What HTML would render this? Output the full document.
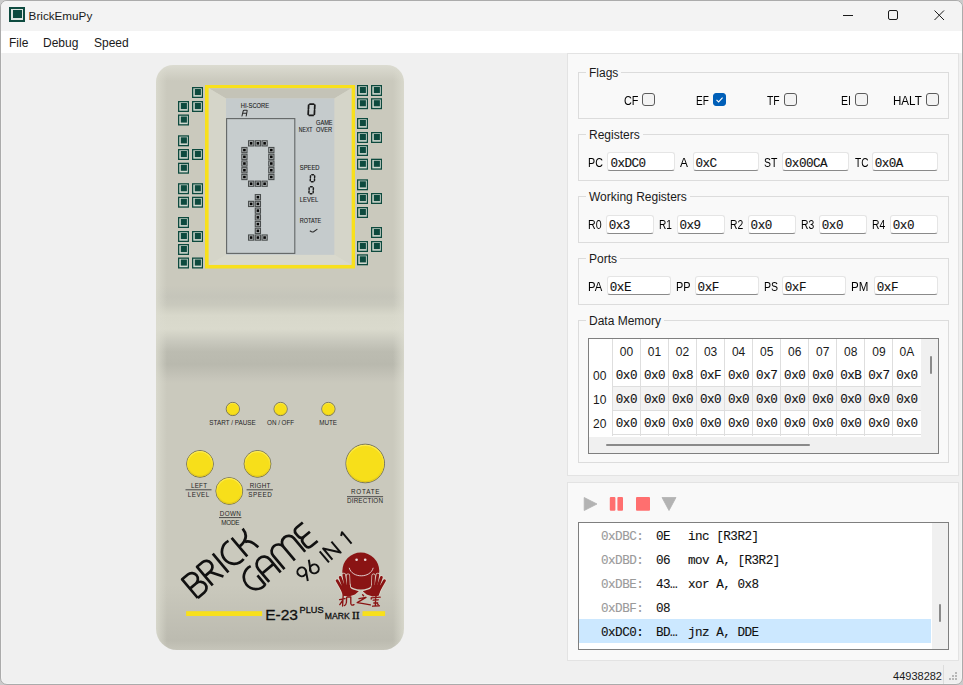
<!DOCTYPE html>
<html><head><meta charset="utf-8">
<style>
*{margin:0;padding:0;box-sizing:border-box}
html,body{width:963px;height:685px;overflow:hidden;background:#cbcbcb}
body{font-family:"Liberation Sans",sans-serif;font-size:11.5px;color:#1a1a1a;position:relative}
.win{position:absolute;left:0;top:0;width:963px;height:685px;border:1px solid #ababab;border-radius:7px;background:#f0f0f0;overflow:hidden;box-shadow:inset 1px 0 0 #f4f4f4,inset -1px 0 0 #f4f4f4,inset 0 -1px 0 #f4f4f4}
.title{position:absolute;left:0;top:0;width:961px;height:30px;background:#f3f3f3}
.menu{position:absolute;left:0;top:30px;width:961px;height:22px;background:#fff}
.a{position:absolute;white-space:nowrap}
.mono{font-family:"Liberation Mono",monospace;-webkit-text-stroke:0.12px currentColor}
.panel{position:absolute;background:#f9f9f9;border:1px solid #e3e3e3}
.grp{position:absolute;border:1px solid #dcdcdc}
.gt{position:absolute;background:#f9f9f9;padding:0 3px;font-size:12px;line-height:14px}
.lbl{position:absolute;font-size:12px;line-height:14px;color:#000}
.ed{position:absolute;height:19px;background:#fff;border:1px solid #e5e5e5;border-bottom:1px solid #8a8a8a;border-radius:3px}
.ed span{position:absolute;left:2px;top:2px;font-family:"Liberation Mono",monospace;-webkit-text-stroke:0.12px currentColor;font-size:12.6px;letter-spacing:-0.5px;line-height:14px;color:#111}
.cb{position:absolute;width:13px;height:13px;border:1px solid #5c5c5c;border-radius:3px;background:#f3f3f3}
</style></head><body>
<div class="win">
  <div class="title"></div>
  <div class="menu"></div>
</div>
<!-- title bar -->
<svg class="a" style="left:0;top:0" width="963" height="30">
  <rect x="9" y="7" width="16" height="15" fill="#0e4b40"/>
  <rect x="11" y="9" width="12" height="11" fill="#dfe6e2"/>
  <rect x="13" y="10" width="9" height="8" fill="#0e4b40"/>
  <line x1="843" y1="15.5" x2="853" y2="15.5" stroke="#1a1a1a" stroke-width="1"/>
  <rect x="888.5" y="10.5" width="9" height="9" rx="1.5" fill="none" stroke="#1a1a1a" stroke-width="1"/>
  <path d="M934.5 10.5 L944 20 M944 10.5 L934.5 20" stroke="#1a1a1a" stroke-width="1"/>
</svg>
<div class="a" style="left:28.6px;top:8.7px;font-size:11.7px;line-height:14px">BrickEmuPy</div>
<div class="a" style="left:9px;top:36px;font-size:12px;line-height:14px">File</div>
<div class="a" style="left:43px;top:36px;font-size:12px;line-height:14px">Debug</div>
<div class="a" style="left:94px;top:36px;font-size:12px;line-height:14px">Speed</div>

<!-- DEVICE -->
<svg id="dev" class="a" style="left:0;top:0" width="963" height="685" viewBox="0 0 963 685">
  <defs>
    <linearGradient id="band" x1="0" y1="0" x2="0" y2="1">
      <stop offset="0" stop-color="#cac9bd"/>
      <stop offset="0.12" stop-color="#c5c5ba"/>
      <stop offset="0.2" stop-color="#c9c9bd"/>
      <stop offset="0.31" stop-color="#d8d8cb"/>
      <stop offset="0.45" stop-color="#dadacd"/>
      <stop offset="0.57" stop-color="#c9c9be"/>
      <stop offset="0.68" stop-color="#bcbcb1"/>
      <stop offset="0.81" stop-color="#b9b9ae"/>
      <stop offset="0.95" stop-color="#c6c5ba"/>
      <stop offset="1" stop-color="#cac9bd"/>
    </linearGradient>
    <linearGradient id="edgeL" x1="0" y1="0" x2="1" y2="0">
      <stop offset="0" stop-color="#dcdcd0"/>
      <stop offset="1" stop-color="#dcdcd0" stop-opacity="0"/>
    </linearGradient>
    <linearGradient id="edgeR" x1="1" y1="0" x2="0" y2="0">
      <stop offset="0" stop-color="#dcdcd0"/>
      <stop offset="1" stop-color="#dcdcd0" stop-opacity="0"/>
    </linearGradient>
    <linearGradient id="edgeT" x1="0" y1="0" x2="0" y2="1">
      <stop offset="0" stop-color="#e0e0d6"/>
      <stop offset="1" stop-color="#e0e0d6" stop-opacity="0"/>
    </linearGradient>
    <linearGradient id="botg" x1="0" y1="0" x2="0" y2="1">
      <stop offset="0" stop-color="#bcbbb0" stop-opacity="0"/>
      <stop offset="0.85" stop-color="#bcbbb0" stop-opacity="1"/>
      <stop offset="1" stop-color="#c6c5ba" stop-opacity="1"/>
    </linearGradient>
    <radialGradient id="btn" cx="0.5" cy="0.45" r="0.5">
      <stop offset="0.8" stop-color="#f8e020"/>
      <stop offset="1" stop-color="#e8cf18"/>
    </radialGradient>
    <g id="gsq">
      <rect x="0" y="0" width="11" height="11" fill="#0d4a3e"/>
      <rect x="1.3" y="1.3" width="8.5" height="8.4" fill="#d0d8cf"/>
      <rect x="2.8" y="2" width="6.1" height="6.1" fill="#0d4a3e"/>
    </g>
    <g id="blk">
      <rect x="0" y="0" width="6.3" height="6.3" fill="#4a4e4e"/>
      <rect x="1.1" y="1.1" width="4.1" height="4.1" fill="#b9bebe"/>
      <rect x="1.85" y="1.85" width="2.6" height="2.6" fill="#050505"/>
    </g>
  </defs>
  <mask id="bodymask" maskUnits="userSpaceOnUse" x="0" y="0" width="963" height="685"><path d="M173,65 H387 A17,17 0 0 1 404,82 V629 A21,21 0 0 1 383,650 H177 A21,21 0 0 1 156,629 V82 A17,17 0 0 1 173,65 Z" fill="#fff"/></mask>
  <g mask="url(#bodymask)">
  <rect x="156" y="65" width="248" height="585" fill="#cac9bd"/>
  <rect x="156" y="285" width="248" height="98" fill="url(#band)"/>
  <rect x="156" y="65" width="248" height="16" fill="url(#edgeT)" opacity="0.8"/>
  <rect x="156" y="585" width="248" height="65" fill="url(#botg)"/>
  <rect x="156" y="65" width="11" height="585" fill="url(#edgeL)" opacity="0.8"/>
  <rect x="393" y="65" width="11" height="585" fill="url(#edgeR)" opacity="0.8"/>
  </g>
  <rect x="205" y="85" width="150" height="183.5" fill="#f8e01c"/>
  <rect x="208.8" y="88.3" width="142.6" height="176.5" fill="#d6d6ca"/>
  <polygon points="208.8,88.3 351.4,88.3 334.3,98.4 226,98.4" fill="#c4c3b7"/>
  <polygon points="208.8,88.3 226,98.4 226,254.8 208.8,264.8" fill="#d5d5c9"/>
  <polygon points="351.4,88.3 334.3,98.4 334.3,254.8 351.4,264.8" fill="#d5d5c9"/>
  <polygon points="208.8,264.8 226,254.8 334.3,254.8 351.4,264.8" fill="#d9d9cd"/>
  <rect x="226" y="98.4" width="108.3" height="156.4" fill="#c5cbcc"/>
  <rect x="226.6" y="118.6" width="68.2" height="134.8" fill="#c7cdce" stroke="#626666" stroke-width="1.1"/>
  <g font-family="Liberation Sans" fill="#1c1c1c" font-size="7.6" stroke="#1c1c1c" stroke-width="0.12">
    <text x="240.8" y="108" textLength="28.4" lengthAdjust="spacingAndGlyphs">HI-SCORE</text>
    <text x="298.8" y="131.8" textLength="13.6" lengthAdjust="spacingAndGlyphs">NEXT</text>
    <text x="316" y="124.9" textLength="16.6" lengthAdjust="spacingAndGlyphs">GAME</text>
    <text x="316" y="131.6" textLength="16.2" lengthAdjust="spacingAndGlyphs">OVER</text>
    <text x="299.8" y="170.4" textLength="19.7" lengthAdjust="spacingAndGlyphs">SPEED</text>
    <text x="299.8" y="201.9" textLength="18.4" lengthAdjust="spacingAndGlyphs">LEVEL</text>
    <text x="299.8" y="222.9" textLength="21.4" lengthAdjust="spacingAndGlyphs">ROTATE</text>
  </g>
  <g fill="none" stroke="#2a2a2a" stroke-width="1.05" stroke-linecap="round">
    <path d="M242 116 L243.2 111 Q243.5 110.2 244.3 110.2 L246.5 110.2 Q247.3 110.2 247.1 111 L246.2 116 M243 113.2 L246.5 113.2"/>
  
    <path d="M309.95 104.00 L313.65 104.00 M309.35 115.40 L313.05 115.40 M308.64 105.05 L308.44 108.95 M308.36 110.45 L308.16 114.35 M314.84 105.05 L314.64 108.95 M314.56 110.45 L314.36 114.35" stroke-width="1.75" stroke="#1a1a1a"/>
    <path d="M311.80 174.80 L313.50 174.80 M311.45 181.80 L313.15 181.80 M310.50 175.85 L310.41 177.55 M310.34 179.05 L310.25 180.75 M314.70 175.85 L314.61 177.55 M314.54 179.05 L314.45 180.75" stroke-width="1.45" stroke="#1a1a1a"/>
    <path d="M310.50 186.80 L312.20 186.80 M310.15 193.80 L311.85 193.80 M309.20 187.85 L309.11 189.55 M309.04 191.05 L308.95 192.75 M313.40 187.85 L313.31 189.55 M313.24 191.05 L313.15 192.75" stroke-width="1.45" stroke="#1a1a1a"/>
    <path d="M310.2,231 Q312,232.4 313.6,231.8 L317,229.4" stroke-width="1.1"/>
  </g>
<use href="#gsq" x="192" y="87.0"/>
<use href="#gsq" x="178" y="101.0"/>
<use href="#gsq" x="192" y="101.0"/>
<use href="#gsq" x="178" y="114.5"/>
<use href="#gsq" x="178" y="135.3"/>
<use href="#gsq" x="178" y="149.0"/>
<use href="#gsq" x="192" y="149.0"/>
<use href="#gsq" x="178" y="162.7"/>
<use href="#gsq" x="178" y="183.2"/>
<use href="#gsq" x="192" y="183.2"/>
<use href="#gsq" x="178" y="196.7"/>
<use href="#gsq" x="192" y="196.7"/>
<use href="#gsq" x="178" y="217.0"/>
<use href="#gsq" x="178" y="231.0"/>
<use href="#gsq" x="192" y="231.0"/>
<use href="#gsq" x="178" y="244.0"/>
<use href="#gsq" x="178" y="257.5"/>
<use href="#gsq" x="192" y="257.5"/>
<use href="#gsq" x="357" y="85.0"/>
<use href="#gsq" x="371" y="85.0"/>
<use href="#gsq" x="357" y="98.2"/>
<use href="#gsq" x="371" y="98.2"/>
<use href="#gsq" x="357" y="118.0"/>
<use href="#gsq" x="357" y="132.0"/>
<use href="#gsq" x="371" y="132.0"/>
<use href="#gsq" x="357" y="145.0"/>
<use href="#gsq" x="357" y="158.7"/>
<use href="#gsq" x="371" y="158.7"/>
<use href="#gsq" x="357" y="179.3"/>
<use href="#gsq" x="357" y="193.0"/>
<use href="#gsq" x="371" y="193.0"/>
<use href="#gsq" x="357" y="207.0"/>
<use href="#gsq" x="371" y="227.0"/>
<use href="#gsq" x="357" y="241.0"/>
<use href="#gsq" x="371" y="241.0"/>
<use href="#gsq" x="357" y="254.3"/>
<use href="#blk" x="247.99" y="140.19"/>
<use href="#blk" x="254.72" y="140.19"/>
<use href="#blk" x="261.45" y="140.19"/>
<use href="#blk" x="241.26" y="146.92"/>
<use href="#blk" x="241.26" y="153.65"/>
<use href="#blk" x="241.26" y="160.38"/>
<use href="#blk" x="241.26" y="167.11"/>
<use href="#blk" x="241.26" y="173.84"/>
<use href="#blk" x="268.18" y="146.92"/>
<use href="#blk" x="268.18" y="153.65"/>
<use href="#blk" x="268.18" y="160.38"/>
<use href="#blk" x="268.18" y="167.11"/>
<use href="#blk" x="268.18" y="173.84"/>
<use href="#blk" x="247.99" y="180.57"/>
<use href="#blk" x="254.72" y="180.57"/>
<use href="#blk" x="261.45" y="180.57"/>
<use href="#blk" x="254.72" y="194.03"/>
<use href="#blk" x="247.99" y="200.76"/>
<use href="#blk" x="254.72" y="200.76"/>
<use href="#blk" x="254.72" y="207.49"/>
<use href="#blk" x="254.72" y="214.22"/>
<use href="#blk" x="254.72" y="220.95"/>
<use href="#blk" x="254.72" y="227.68"/>
<use href="#blk" x="247.99" y="234.41"/>
<use href="#blk" x="254.72" y="234.41"/>
<use href="#blk" x="261.45" y="234.41"/>


  <defs>
    <radialGradient id="yb" cx="0.5" cy="0.5" r="0.5">
      <stop offset="0" stop-color="#f7df1a"/>
      <stop offset="0.86" stop-color="#f7df1a"/>
      <stop offset="0.93" stop-color="#fae84a"/>
      <stop offset="1" stop-color="#e9d21e"/>
    </radialGradient>
  </defs>
  <defs><linearGradient id="ring" x1="0" y1="0" x2="0" y2="1">
      <stop offset="0" stop-color="#fcea55"/>
      <stop offset="0.5" stop-color="#f8e22a"/>
      <stop offset="1" stop-color="#e2c81c"/>
    </linearGradient></defs>
  <g><circle cx="232.8" cy="409" r="6.6" fill="#f7df1a" stroke="#66665c" stroke-width="0.9"/><circle cx="232.8" cy="409" r="5.75" fill="none" stroke="url(#ring)" stroke-width="0.8"/><circle cx="280.6" cy="409" r="6.6" fill="#f7df1a" stroke="#66665c" stroke-width="0.9"/><circle cx="280.6" cy="409" r="5.75" fill="none" stroke="url(#ring)" stroke-width="0.8"/><circle cx="328.4" cy="409" r="6.6" fill="#f7df1a" stroke="#66665c" stroke-width="0.9"/><circle cx="328.4" cy="409" r="5.75" fill="none" stroke="url(#ring)" stroke-width="0.8"/><circle cx="200" cy="463.9" r="13.4" fill="#f7df1a" stroke="#66665c" stroke-width="0.9"/><circle cx="200" cy="463.9" r="12.30" fill="none" stroke="url(#ring)" stroke-width="1.3"/><circle cx="257.5" cy="463.9" r="13.4" fill="#f7df1a" stroke="#66665c" stroke-width="0.9"/><circle cx="257.5" cy="463.9" r="12.30" fill="none" stroke="url(#ring)" stroke-width="1.3"/><circle cx="229.3" cy="491" r="13.4" fill="#f7df1a" stroke="#66665c" stroke-width="0.9"/><circle cx="229.3" cy="491" r="12.30" fill="none" stroke="url(#ring)" stroke-width="1.3"/><circle cx="365.2" cy="463.5" r="19.3" fill="#f7df1a" stroke="#66665c" stroke-width="0.9"/><circle cx="365.2" cy="463.5" r="18.20" fill="none" stroke="url(#ring)" stroke-width="1.3"/></g>
  <g font-family="Liberation Sans" fill="#262626" font-size="6.3">
    <text x="209.3" y="424.6" textLength="46.5" lengthAdjust="spacing">START / PAUSE</text>
    <text x="267" y="424.6" textLength="27.2" lengthAdjust="spacing">ON / OFF</text>
    <text x="319.2" y="424.6" textLength="17.8" lengthAdjust="spacing">MUTE</text>
    <text x="191" y="488" textLength="16" lengthAdjust="spacing">LEFT</text>
    <text x="187.8" y="496.8" textLength="21.5" lengthAdjust="spacing">LEVEL</text>
    <text x="249.8" y="488" textLength="20.5" lengthAdjust="spacing">RIGHT</text>
    <text x="248.3" y="496.8" textLength="23.5" lengthAdjust="spacing">SPEED</text>
    <text x="219.8" y="516" textLength="21" lengthAdjust="spacing">DOWN</text>
    <text x="221.2" y="524.8" textLength="18.2" lengthAdjust="spacing">MODE</text>
    <text x="351" y="494.1" textLength="28.5" lengthAdjust="spacing">ROTATE</text>
    <text x="347" y="502.9" textLength="36" lengthAdjust="spacing">DIRECTION</text>
  </g>
  <g stroke="#3a3a3a" stroke-width="0.9">
    <line x1="185.5" y1="489.8" x2="211.5" y2="489.8"/>
    <line x1="246.6" y1="489.8" x2="272.9" y2="489.8"/>
    <line x1="219" y1="517.6" x2="241.4" y2="517.6"/>
    <line x1="347" y1="496.7" x2="383.1" y2="496.7"/>
  </g>
  <rect x="186.1" y="611.2" width="76" height="4.8" fill="#f8e01c"/>
  <rect x="362.5" y="611.2" width="22.6" height="4.8" fill="#f8e01c"/>
  <g font-family="Liberation Sans" fill="#101010" stroke="#101010" stroke-width="0.3">
    <text x="265.2" y="619.6" font-size="15" textLength="32.8" lengthAdjust="spacingAndGlyphs">E-23</text>
    <text x="299.6" y="612.9" font-size="8.3" textLength="24" lengthAdjust="spacingAndGlyphs">PLUS</text>
    <text x="324.8" y="618.8" font-size="9.5" textLength="25" lengthAdjust="spacingAndGlyphs">MARK</text>
    <text x="352" y="618.8" font-size="9.5" font-family="Liberation Serif" textLength="7.7" lengthAdjust="spacingAndGlyphs">II</text>
  </g>

  <g transform="translate(197.8,598) rotate(-40) scale(1,-1)" fill="none" stroke="#111" stroke-width="2.7" stroke-linecap="butt" stroke-linejoin="round">
    <path d="M0,0 V24.4 H7.5 A6.1,6.1 0 0 0 7.5,12.2 H0 M7.5,12.2 H8.5 A6.1,6.1 0 0 0 8.5,0 H0"/>
    <path d="M19.5,0 V24.4 H26.5 A6.1,6.1 0 0 0 26.5,12.2 H19.5 M26,12.2 L33.5,0"/>
    <path d="M40,0 V24.4"/>
    <path d="M60.2,24 A12.1,12.1 0 1 1 60.2,0.4"/>
    <path d="M64.6,0 V24.4 M79,24.4 Q79,12.5 64.6,12.5 M72,12.5 Q77.5,11.5 79,0"/>
    <g transform="translate(0,-33.6)">
      <path d="M61,24 A12.1,12.1 0 1 1 60.2,0.4 M60.2,0 V12.5"/>
      <path d="M65,0 V16.9 A7.5,7.5 0 0 0 80,16.9 V0 M65,11 H80"/>
      <path d="M85,0 V17.65 A6.75,6.75 0 0 0 98.5,17.65 V0 M98.5,17.65 A6.75,6.75 0 0 0 112,17.65 V0"/>
      <path d="M129,24 H121 Q116.5,24 116.5,19.5 V16.5 Q116.5,12.3 121,12.3 H128.5 M121,12.3 Q116,12.3 116,7.5 V4.6 Q116,0.3 120.5,0.3 H128.5"/>
    </g>
  </g>
  <g transform="translate(301.8,571.9) rotate(-40) scale(1,-1)" fill="none" stroke="#111" stroke-width="2" stroke-linejoin="round">
    <circle cx="0" cy="0" r="4.4"/>
    <path d="M4.3,-1 L-1.2,-10.8"/>
    <circle cx="11.5" cy="-5.8" r="4.4"/>
    <path d="M7.3,-5 L13.2,4.8"/>
    <path d="M26.9,-10.2 V4.2"/>
    <path d="M31.4,-10.2 V4.2 L42.2,-10.2 V4.2"/>
    <path d="M56.3,-10.3 V4.6 L53.2,2.2"/>
  </g>
  <g fill="#8a1414">
    <circle cx="360.8" cy="571.1" r="18.5"/>
  </g>
  <g id="lhand">
    <g stroke="#ddd8cc" stroke-width="4.2" stroke-linecap="round">
      <line x1="337.1" y1="580.6" x2="342" y2="589"/>
      <line x1="340.2" y1="577.4" x2="344" y2="588"/>
      <line x1="343.8" y1="574.9" x2="346" y2="588"/>
      <line x1="348" y1="575.6" x2="348.5" y2="588"/>
    </g>
    <path d="M338.5,585 L349.8,584.5 L350.3,587.5 Q351.5,589.3 354,589.8 L358.8,591.2 L355,594.4 L349,596.4 L343,595.8 Z" fill="#8a1414" stroke="#ddd8cc" stroke-width="1.4"/>
    <g stroke="#8a1414" stroke-width="2.8" stroke-linecap="round">
      <line x1="337.1" y1="580.6" x2="342" y2="589"/>
      <line x1="340.2" y1="577.4" x2="344" y2="588"/>
      <line x1="343.8" y1="574.9" x2="346" y2="588"/>
      <line x1="348" y1="575.6" x2="348.5" y2="588"/>
    </g>
    <path d="M339.5,586 L349.8,585 L350.3,587.5 Q351.5,589.3 354,589.8 L358.8,591.2 L355,594.4 L349,596.4 L343,595.8 Z" fill="#8a1414"/>
  </g>
  <use href="#lhand" transform="translate(721.6,0) scale(-1,1)"/>
  <g fill="#fff" opacity="0.85">
    <circle cx="356.6" cy="559.7" r="1.3"/>
    <circle cx="365.2" cy="559.7" r="1.3"/>
  </g>
  <path d="M349.2,567.8 C352,578.5 370.5,578.5 373.2,567.8" fill="none" stroke="#e8dede" stroke-width="0.9"/>
  <g fill="none" stroke="#8a1414" stroke-width="1.35" stroke-linecap="round" stroke-linejoin="round">
    <path d="M339.6,599.6 L345,598.6 M343.2,594.6 L342.6,606 M342.6,600.5 L339.8,604.6 M346.6,597.4 L346.4,602.5 Q346,605 344.4,605.6 M347.2,597 L350.8,597 L350.8,603.5 Q351.2,606 354,604.6"/>
    <path d="M362.6,594.8 L363.6,595.8 M359,598.6 L366,597.4 L357.2,602.6 Q363,603.6 370.4,604.8"/>
    <path d="M375.6,595.4 L376,596.4 M371.2,597.8 L380.2,597.2 M371.4,597.8 L371.2,599 M373.2,600.2 L378.2,599.8 M375.6,598.4 L375.4,605.8 M372.6,606.2 L379.4,605.8 M373.8,603 L377.6,602.8 M377.6,604 L378.2,604.6"/>
  </g>

</svg>

<div id="rp">
<div class="panel" style="left:567px;top:53px;width:392px;height:423px"></div>
<div class="panel" style="left:567px;top:482px;width:392px;height:179px"></div>
<div class="grp" style="left:578px;top:72.0px;width:371px;height:47.0px"></div>
<div class="gt" style="left:586px;top:65.94px">Flags</div>
<div class="grp" style="left:578px;top:134.0px;width:371px;height:47.1px"></div>
<div class="gt" style="left:586px;top:127.94px">Registers</div>
<div class="grp" style="left:578px;top:195.9px;width:371px;height:46.7px"></div>
<div class="gt" style="left:586px;top:190.04px">Working Registers</div>
<div class="grp" style="left:578px;top:257.6px;width:371px;height:47.1px"></div>
<div class="gt" style="left:586px;top:252.04px">Ports</div>
<div class="grp" style="left:578px;top:319.8px;width:371px;height:142.9px"></div>
<div class="gt" style="left:586px;top:313.84px">Data Memory</div>
<div class="lbl" style="left:623.5px;top:93.84px;transform:scaleX(0.906);transform-origin:0 0">CF</div>
<div class="cb" style="left:642.0px;top:93px"></div>
<div class="lbl" style="left:696px;top:93.84px;transform:scaleX(0.836);transform-origin:0 0">EF</div>
<div class="cb" style="left:712.8px;top:93px;background:#005fb8;border-color:#005fb8"><svg width="11" height="11" style="position:absolute;left:0;top:0"><path d="M2.5 5.8 L4.6 7.9 L8.6 3.6" fill="none" stroke="#fff" stroke-width="1.1"/></svg></div>
<div class="lbl" style="left:767.2px;top:93.84px;transform:scaleX(0.864);transform-origin:0 0">TF</div>
<div class="cb" style="left:784.0px;top:93px"></div>
<div class="lbl" style="left:841.3px;top:93.84px;transform:scaleX(0.875);transform-origin:0 0">EI</div>
<div class="cb" style="left:855.0px;top:93px"></div>
<div class="lbl" style="left:893px;top:93.84px;transform:scaleX(0.966);transform-origin:0 0">HALT</div>
<div class="cb" style="left:925.6px;top:93px"></div>
<div class="lbl" style="left:588.3px;top:156.14px;transform:scaleX(0.891);transform-origin:0 0">PC</div>
<div class="ed" style="left:607.4px;top:152.2px;width:67.9px"><span style="top:3.46px">0xDC0</span></div>
<div class="lbl" style="left:680.1px;top:156.14px;transform:scaleX(0.993);transform-origin:0 0">A</div>
<div class="ed" style="left:692.5px;top:152.2px;width:66.9px"><span style="top:3.46px">0xC</span></div>
<div class="lbl" style="left:763.7px;top:156.14px;transform:scaleX(0.869);transform-origin:0 0">ST</div>
<div class="ed" style="left:781.8px;top:152.2px;width:67.5px"><span style="top:3.46px">0x00CA</span></div>
<div class="lbl" style="left:854.5px;top:156.14px;transform:scaleX(0.843);transform-origin:0 0">TC</div>
<div class="ed" style="left:871.7px;top:152.2px;width:66.5px"><span style="top:3.46px">0x0A</span></div>
<div class="lbl" style="left:588.3px;top:218.44px;transform:scaleX(0.884);transform-origin:0 0">R0</div>
<div class="ed" style="left:605.7px;top:214.5px;width:48.4px"><span style="top:3.46px">0x3</span></div>
<div class="lbl" style="left:659.3px;top:218.44px;transform:scaleX(0.843);transform-origin:0 0">R1</div>
<div class="ed" style="left:676.5px;top:214.5px;width:48.6px"><span style="top:3.46px">0x9</span></div>
<div class="lbl" style="left:730.3px;top:218.44px;transform:scaleX(0.862);transform-origin:0 0">R2</div>
<div class="ed" style="left:747.6px;top:214.5px;width:48.3px"><span style="top:3.46px">0x0</span></div>
<div class="lbl" style="left:801.1px;top:218.44px;transform:scaleX(0.862);transform-origin:0 0">R3</div>
<div class="ed" style="left:818.8px;top:214.5px;width:48.2px"><span style="top:3.46px">0x0</span></div>
<div class="lbl" style="left:872.1px;top:218.44px;transform:scaleX(0.862);transform-origin:0 0">R4</div>
<div class="ed" style="left:889.8px;top:214.5px;width:48.4px"><span style="top:3.46px">0x0</span></div>
<div class="lbl" style="left:588.3px;top:280.34px;transform:scaleX(0.94);transform-origin:0 0">PA</div>
<div class="ed" style="left:606.8px;top:276.4px;width:64.3px"><span style="top:3.46px">0xE</span></div>
<div class="lbl" style="left:675.9px;top:280.34px;transform:scaleX(0.906);transform-origin:0 0">PP</div>
<div class="ed" style="left:694.6px;top:276.4px;width:64.4px"><span style="top:3.46px">0xF</span></div>
<div class="lbl" style="left:764.2px;top:280.34px;transform:scaleX(0.88);transform-origin:0 0">PS</div>
<div class="ed" style="left:781.8px;top:276.4px;width:64.0px"><span style="top:3.46px">0xF</span></div>
<div class="lbl" style="left:851.4px;top:280.34px;transform:scaleX(0.966);transform-origin:0 0">PM</div>
<div class="ed" style="left:873.8px;top:276.4px;width:64.4px"><span style="top:3.46px">0xF</span></div>
<div class="a" style="left:588px;top:338px;width:351px;height:116px;background:#fff;border:1px solid #7f7f7f;overflow:hidden">
<div class="a" style="left:23.4px;top:47.3px;width:308.6px;height:24px;background:#f3f3f3"></div>
<div class="a" style="left:22.9px;top:0px;width:1px;height:97px;background:#dedede"></div>
<div class="a" style="left:50.9px;top:0px;width:1px;height:97px;background:#dedede"></div>
<div class="a" style="left:79.0px;top:0px;width:1px;height:97px;background:#dedede"></div>
<div class="a" style="left:107.0px;top:0px;width:1px;height:97px;background:#dedede"></div>
<div class="a" style="left:135.1px;top:0px;width:1px;height:97px;background:#dedede"></div>
<div class="a" style="left:163.1px;top:0px;width:1px;height:97px;background:#dedede"></div>
<div class="a" style="left:191.2px;top:0px;width:1px;height:97px;background:#dedede"></div>
<div class="a" style="left:219.2px;top:0px;width:1px;height:97px;background:#dedede"></div>
<div class="a" style="left:247.3px;top:0px;width:1px;height:97px;background:#dedede"></div>
<div class="a" style="left:275.4px;top:0px;width:1px;height:97px;background:#dedede"></div>
<div class="a" style="left:303.4px;top:0px;width:1px;height:97px;background:#dedede"></div>
<div class="a" style="left:331.5px;top:0px;width:1px;height:97px;background:#dedede"></div>
<div class="a" style="left:23.4px;top:46.8px;width:308.6px;height:1px;background:#dedede"></div>
<div class="a" style="left:23.4px;top:70.6px;width:308.6px;height:1px;background:#dedede"></div>
<div class="a" style="left:23.4px;top:94.5px;width:308.6px;height:1px;background:#dedede"></div>
<div class="a" style="left:23.4px;width:28px;text-align:center;top:5.74px;font-size:12px;line-height:14px">00</div>
<div class="a" style="left:51.5px;width:28px;text-align:center;top:5.74px;font-size:12px;line-height:14px">01</div>
<div class="a" style="left:79.5px;width:28px;text-align:center;top:5.74px;font-size:12px;line-height:14px">02</div>
<div class="a" style="left:107.6px;width:28px;text-align:center;top:5.74px;font-size:12px;line-height:14px">03</div>
<div class="a" style="left:135.6px;width:28px;text-align:center;top:5.74px;font-size:12px;line-height:14px">04</div>
<div class="a" style="left:163.7px;width:28px;text-align:center;top:5.74px;font-size:12px;line-height:14px">05</div>
<div class="a" style="left:191.7px;width:28px;text-align:center;top:5.74px;font-size:12px;line-height:14px">06</div>
<div class="a" style="left:219.8px;width:28px;text-align:center;top:5.74px;font-size:12px;line-height:14px">07</div>
<div class="a" style="left:247.8px;width:28px;text-align:center;top:5.74px;font-size:12px;line-height:14px">08</div>
<div class="a" style="left:275.9px;width:28px;text-align:center;top:5.74px;font-size:12px;line-height:14px">09</div>
<div class="a" style="left:303.9px;width:28px;text-align:center;top:5.74px;font-size:12px;line-height:14px">0A</div>
<div class="a" style="left:4px;top:30.44px;font-size:12px;line-height:14px">00</div>
<div class="a mono" style="left:23.4px;width:28px;text-align:center;top:30.04px;font-size:12.6px;letter-spacing:-0.5px;line-height:14px;color:#111">0x0</div>
<div class="a mono" style="left:51.5px;width:28px;text-align:center;top:30.04px;font-size:12.6px;letter-spacing:-0.5px;line-height:14px;color:#111">0x0</div>
<div class="a mono" style="left:79.5px;width:28px;text-align:center;top:30.04px;font-size:12.6px;letter-spacing:-0.5px;line-height:14px;color:#111">0x8</div>
<div class="a mono" style="left:107.6px;width:28px;text-align:center;top:30.04px;font-size:12.6px;letter-spacing:-0.5px;line-height:14px;color:#111">0xF</div>
<div class="a mono" style="left:135.6px;width:28px;text-align:center;top:30.04px;font-size:12.6px;letter-spacing:-0.5px;line-height:14px;color:#111">0x0</div>
<div class="a mono" style="left:163.7px;width:28px;text-align:center;top:30.04px;font-size:12.6px;letter-spacing:-0.5px;line-height:14px;color:#111">0x7</div>
<div class="a mono" style="left:191.7px;width:28px;text-align:center;top:30.04px;font-size:12.6px;letter-spacing:-0.5px;line-height:14px;color:#111">0x0</div>
<div class="a mono" style="left:219.8px;width:28px;text-align:center;top:30.04px;font-size:12.6px;letter-spacing:-0.5px;line-height:14px;color:#111">0x0</div>
<div class="a mono" style="left:247.8px;width:28px;text-align:center;top:30.04px;font-size:12.6px;letter-spacing:-0.5px;line-height:14px;color:#111">0xB</div>
<div class="a mono" style="left:275.9px;width:28px;text-align:center;top:30.04px;font-size:12.6px;letter-spacing:-0.5px;line-height:14px;color:#111">0x7</div>
<div class="a mono" style="left:303.9px;width:28px;text-align:center;top:30.04px;font-size:12.6px;letter-spacing:-0.5px;line-height:14px;color:#111">0x0</div>
<div class="a" style="left:4px;top:54.24px;font-size:12px;line-height:14px">10</div>
<div class="a mono" style="left:23.4px;width:28px;text-align:center;top:53.84px;font-size:12.6px;letter-spacing:-0.5px;line-height:14px;color:#111">0x0</div>
<div class="a mono" style="left:51.5px;width:28px;text-align:center;top:53.84px;font-size:12.6px;letter-spacing:-0.5px;line-height:14px;color:#111">0x0</div>
<div class="a mono" style="left:79.5px;width:28px;text-align:center;top:53.84px;font-size:12.6px;letter-spacing:-0.5px;line-height:14px;color:#111">0x0</div>
<div class="a mono" style="left:107.6px;width:28px;text-align:center;top:53.84px;font-size:12.6px;letter-spacing:-0.5px;line-height:14px;color:#111">0x0</div>
<div class="a mono" style="left:135.6px;width:28px;text-align:center;top:53.84px;font-size:12.6px;letter-spacing:-0.5px;line-height:14px;color:#111">0x0</div>
<div class="a mono" style="left:163.7px;width:28px;text-align:center;top:53.84px;font-size:12.6px;letter-spacing:-0.5px;line-height:14px;color:#111">0x0</div>
<div class="a mono" style="left:191.7px;width:28px;text-align:center;top:53.84px;font-size:12.6px;letter-spacing:-0.5px;line-height:14px;color:#111">0x0</div>
<div class="a mono" style="left:219.8px;width:28px;text-align:center;top:53.84px;font-size:12.6px;letter-spacing:-0.5px;line-height:14px;color:#111">0x0</div>
<div class="a mono" style="left:247.8px;width:28px;text-align:center;top:53.84px;font-size:12.6px;letter-spacing:-0.5px;line-height:14px;color:#111">0x0</div>
<div class="a mono" style="left:275.9px;width:28px;text-align:center;top:53.84px;font-size:12.6px;letter-spacing:-0.5px;line-height:14px;color:#111">0x0</div>
<div class="a mono" style="left:303.9px;width:28px;text-align:center;top:53.84px;font-size:12.6px;letter-spacing:-0.5px;line-height:14px;color:#111">0x0</div>
<div class="a" style="left:4px;top:78.04px;font-size:12px;line-height:14px">20</div>
<div class="a mono" style="left:23.4px;width:28px;text-align:center;top:77.64px;font-size:12.6px;letter-spacing:-0.5px;line-height:14px;color:#111">0x0</div>
<div class="a mono" style="left:51.5px;width:28px;text-align:center;top:77.64px;font-size:12.6px;letter-spacing:-0.5px;line-height:14px;color:#111">0x0</div>
<div class="a mono" style="left:79.5px;width:28px;text-align:center;top:77.64px;font-size:12.6px;letter-spacing:-0.5px;line-height:14px;color:#111">0x0</div>
<div class="a mono" style="left:107.6px;width:28px;text-align:center;top:77.64px;font-size:12.6px;letter-spacing:-0.5px;line-height:14px;color:#111">0x0</div>
<div class="a mono" style="left:135.6px;width:28px;text-align:center;top:77.64px;font-size:12.6px;letter-spacing:-0.5px;line-height:14px;color:#111">0x0</div>
<div class="a mono" style="left:163.7px;width:28px;text-align:center;top:77.64px;font-size:12.6px;letter-spacing:-0.5px;line-height:14px;color:#111">0x0</div>
<div class="a mono" style="left:191.7px;width:28px;text-align:center;top:77.64px;font-size:12.6px;letter-spacing:-0.5px;line-height:14px;color:#111">0x0</div>
<div class="a mono" style="left:219.8px;width:28px;text-align:center;top:77.64px;font-size:12.6px;letter-spacing:-0.5px;line-height:14px;color:#111">0x0</div>
<div class="a mono" style="left:247.8px;width:28px;text-align:center;top:77.64px;font-size:12.6px;letter-spacing:-0.5px;line-height:14px;color:#111">0x0</div>
<div class="a mono" style="left:275.9px;width:28px;text-align:center;top:77.64px;font-size:12.6px;letter-spacing:-0.5px;line-height:14px;color:#111">0x0</div>
<div class="a mono" style="left:303.9px;width:28px;text-align:center;top:77.64px;font-size:12.6px;letter-spacing:-0.5px;line-height:14px;color:#111">0x0</div>
<div class="a" style="left:0px;top:97.5px;width:331.6px;height:20px;background:#f0f0f0"></div>
<div class="a" style="left:16.5px;top:105.0px;width:204px;height:2px;border-radius:1px;background:#8a8a8a"></div>
<div class="a" style="left:331.6px;top:0px;width:20px;height:120px;background:#f0f0f0"></div>
<div class="a" style="left:340.5px;top:16.8px;width:2px;height:18px;border-radius:1px;background:#8a8a8a"></div>
</div>
<svg class="a" style="left:0;top:0" width="963" height="685"><g><path d="M584.2,497.5 L597,504 L584.2,510.5 Z" fill="#b3b3b3" stroke="#b3b3b3" stroke-width="0.8" stroke-linejoin="round"/><rect x="609.8" y="497" width="5.6" height="13.8" rx="1" fill="#ff6f6f"/><rect x="617.4" y="497" width="5.6" height="13.8" rx="1" fill="#ff6f6f"/><rect x="636" y="497" width="14" height="13.8" rx="1" fill="#ff6f6f"/><path d="M662,497.5 L676,497.5 L669,510.5 Z" fill="#b3b3b3" stroke="#b3b3b3" stroke-width="0.8" stroke-linejoin="round"/></g></svg>
<div class="a" style="left:578px;top:522px;width:371px;height:128px;background:#fff;border:1px solid #7f7f7f;overflow:hidden">
<div class="a" style="left:0;top:96px;width:352px;height:24px;background:#cce8ff"></div>
<div class="a" style="left:353px;top:0;width:20px;height:130px;background:#f0f0f0"></div>
<div class="a" style="left:360px;top:81px;width:2px;height:18px;border-radius:1px;background:#8a8a8a"></div>
<div class="a mono" style="left:22px;top:7.44px;font-size:12.6px;letter-spacing:-0.5px;line-height:14px;color:#9a9a9a">0xDBC:</div>
<div class="a mono" style="left:77px;top:7.44px;font-size:12.6px;letter-spacing:-0.5px;line-height:14px;color:#111">0E</div>
<div class="a mono" style="left:109px;top:7.44px;font-size:12.6px;letter-spacing:-0.5px;line-height:14px;color:#111">inc [R3R2]</div>
<div class="a mono" style="left:22px;top:31.44px;font-size:12.6px;letter-spacing:-0.5px;line-height:14px;color:#9a9a9a">0xDBD:</div>
<div class="a mono" style="left:77px;top:31.44px;font-size:12.6px;letter-spacing:-0.5px;line-height:14px;color:#111">06</div>
<div class="a mono" style="left:109px;top:31.44px;font-size:12.6px;letter-spacing:-0.5px;line-height:14px;color:#111">mov A, [R3R2]</div>
<div class="a mono" style="left:22px;top:55.44px;font-size:12.6px;letter-spacing:-0.5px;line-height:14px;color:#9a9a9a">0xDBE:</div>
<div class="a mono" style="left:77px;top:55.44px;font-size:12.6px;letter-spacing:-0.5px;line-height:14px;color:#111">43…</div>
<div class="a mono" style="left:109px;top:55.44px;font-size:12.6px;letter-spacing:-0.5px;line-height:14px;color:#111">xor A, 0x8</div>
<div class="a mono" style="left:22px;top:79.44px;font-size:12.6px;letter-spacing:-0.5px;line-height:14px;color:#9a9a9a">0xDBF:</div>
<div class="a mono" style="left:77px;top:79.44px;font-size:12.6px;letter-spacing:-0.5px;line-height:14px;color:#111">08</div>
<div class="a mono" style="left:109px;top:79.44px;font-size:12.6px;letter-spacing:-0.5px;line-height:14px;color:#111"></div>
<div class="a mono" style="left:22px;top:103.44px;font-size:12.6px;letter-spacing:-0.5px;line-height:14px;color:#111">0xDC0:</div>
<div class="a mono" style="left:77px;top:103.44px;font-size:12.6px;letter-spacing:-0.5px;line-height:14px;color:#111">BD…</div>
<div class="a mono" style="left:109px;top:103.44px;font-size:12.6px;letter-spacing:-0.5px;line-height:14px;color:#111">jnz A, DDE</div>
</div>
<div class="a" style="left:800px;width:142px;text-align:right;top:668.74px;font-size:11px;line-height:14px">44938282</div>
<div class="a" style="left:943px;top:665px;width:1px;height:19px;background:#dcdcdc"></div>
<svg class="a" style="left:945px;top:668px" width="16" height="16"><g fill="#b8b8b8"><rect x="10" y="4" width="2" height="2"/><rect x="7" y="7" width="2" height="2"/><rect x="10" y="7" width="2" height="2"/><rect x="4" y="10" width="2" height="2"/><rect x="7" y="10" width="2" height="2"/><rect x="10" y="10" width="2" height="2"/></g></svg>
</div>
</body></html>
